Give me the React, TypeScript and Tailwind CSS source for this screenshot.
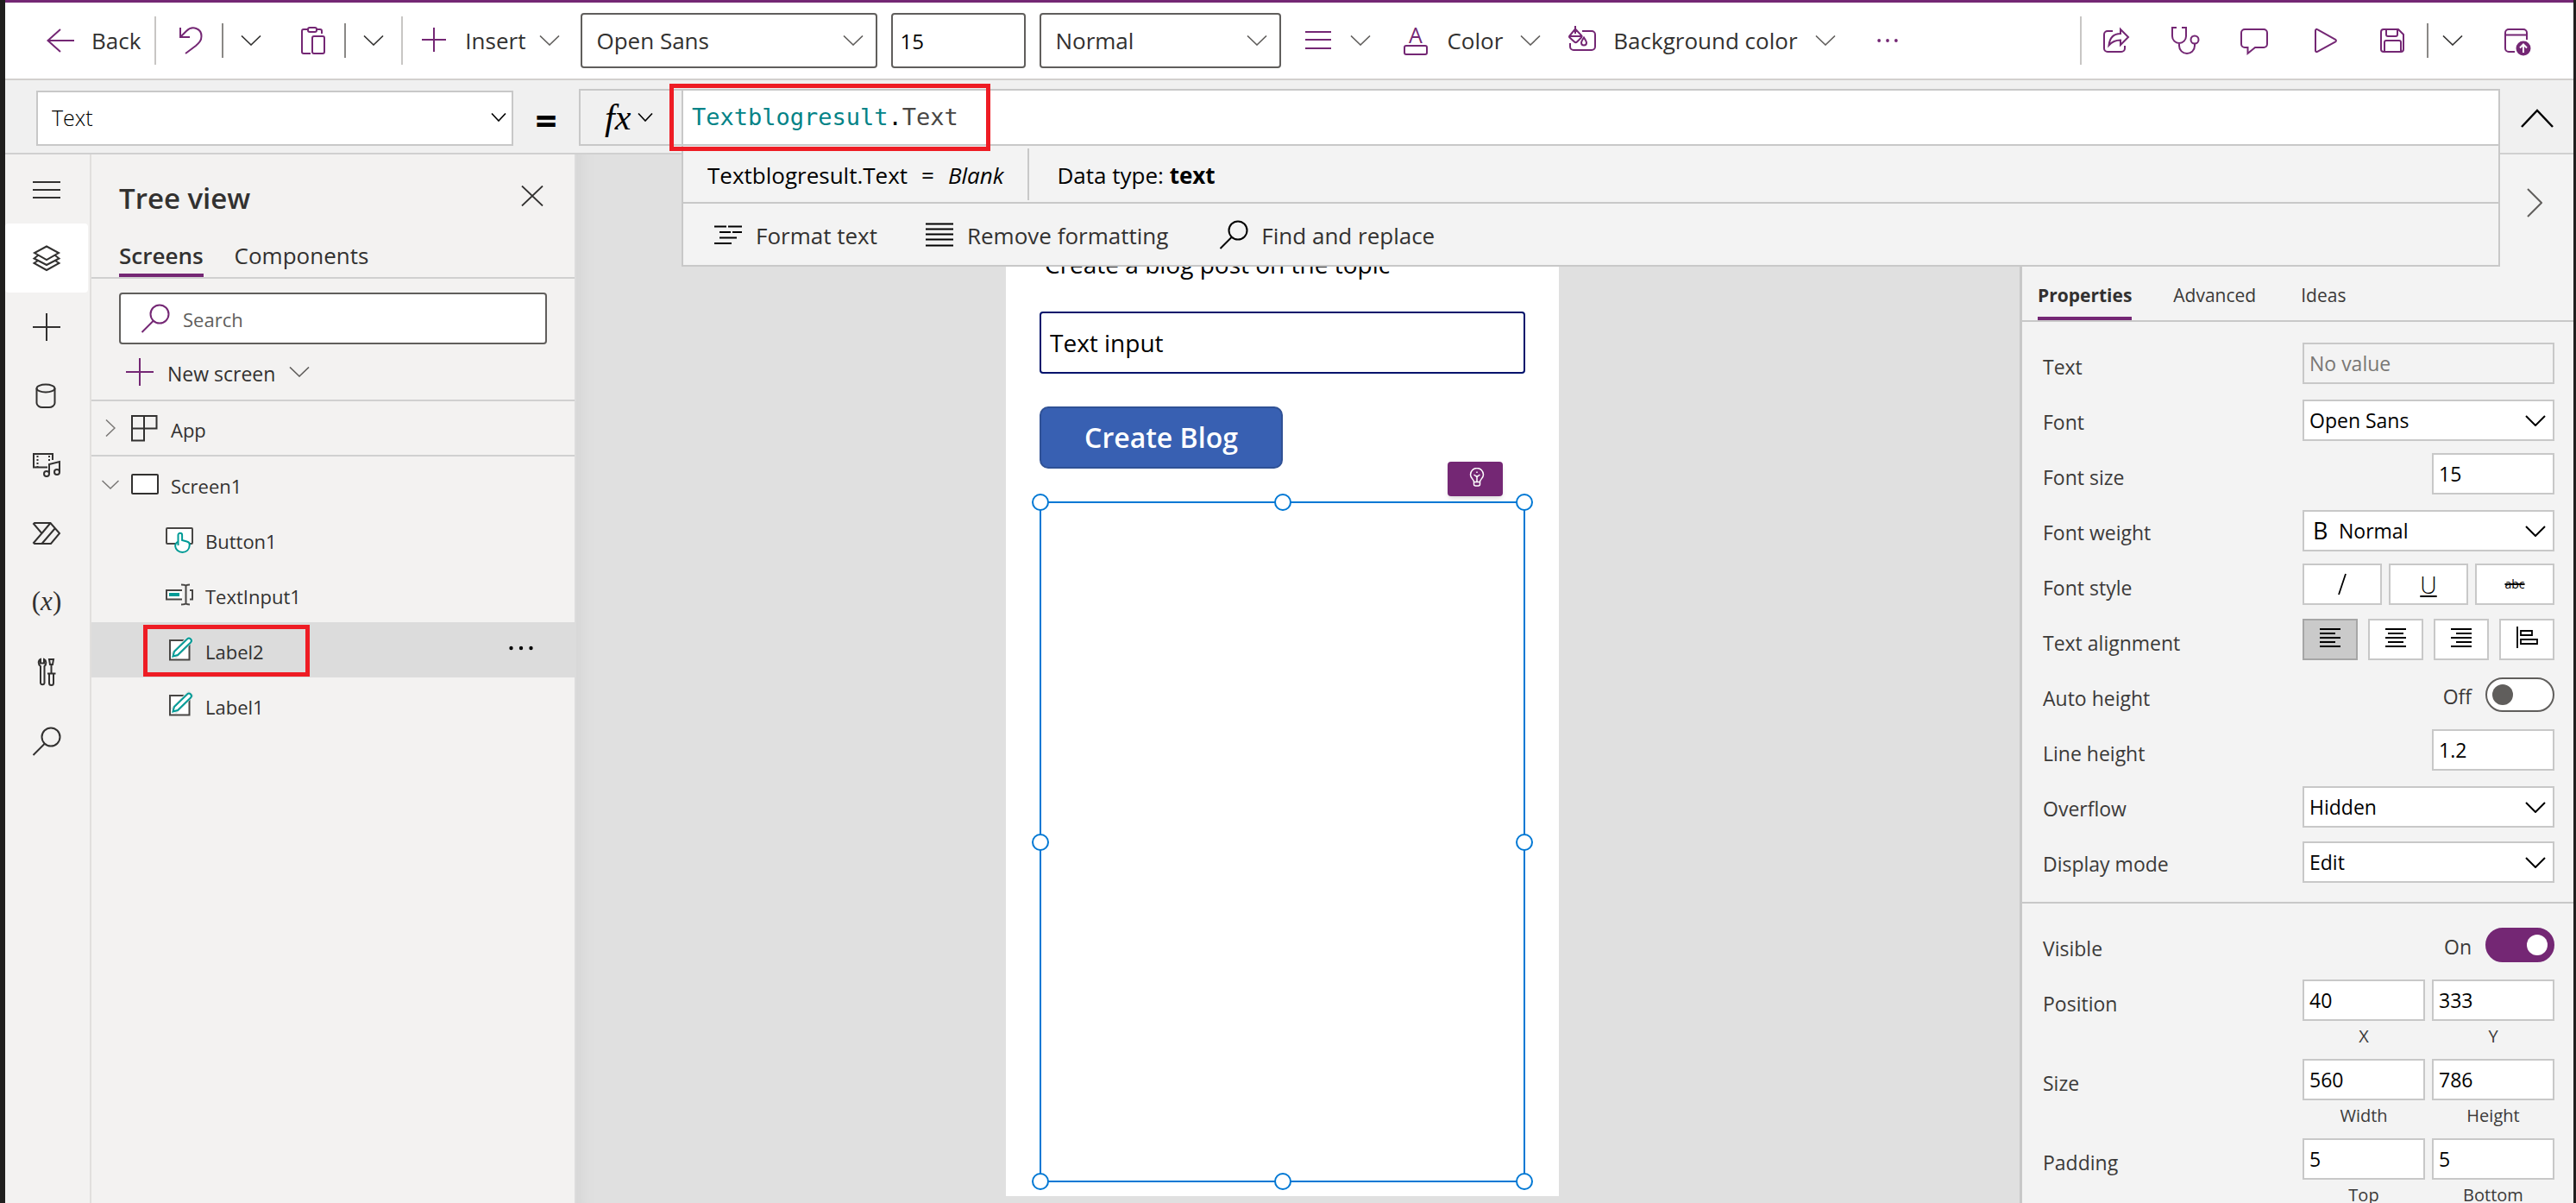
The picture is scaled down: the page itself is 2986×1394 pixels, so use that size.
import type { ReactNode } from "react";

/* ---------- icons ---------- */

function Icon({
  children,
  className = "text-[#742774]",
  size = 32,
}: {
  children: ReactNode;
  className?: string;
  size?: number;
}) {
  return (
    <svg
      width={size}
      height={size}
      viewBox={`0 0 ${size} ${size}`}
      fill="none"
      stroke="currentColor"
      strokeWidth="2"
      overflow="visible"
      aria-hidden="true"
      className={`shrink-0 ${className}`}
    >
      {children}
    </svg>
  );
}

function ChevronDown({ className = "text-[#605e5c]" }: { className?: string }) {
  return (
    <svg width="24" height="12" viewBox="0 0 24 12" fill="none" stroke="currentColor" strokeWidth="1.6" aria-hidden="true" className={`shrink-0 ${className}`}>
      <path d="M1 0.5L12 11L23 0.5" />
    </svg>
  );
}

function SmallChevron({ className = "text-[#323130]" }: { className?: string }) {
  return (
    <svg width="18" height="10" viewBox="0 0 18 10" fill="none" stroke="currentColor" strokeWidth="1.6" aria-hidden="true" className={`shrink-0 ${className}`}>
      <path d="M1 0.5L9 9L17 0.5" />
    </svg>
  );
}

const BackIcon = () => (
  <Icon>
    <path d="M32 16H1.5M16 3L1.5 16L16 29" />
  </Icon>
);
const UndoIcon = () => (
  <Icon>
    <path d="M4 1V12H15M4 12L11 5C18 -2 28.500 2 28.500 11C28.500 16 26 18.500 22 22L10 31" />
  </Icon>
);
const PasteIcon = () => (
  <Icon>
    <path d="M10 3H5a2 2 0 0 0-2 2v24a2 2 0 0 0 2 2h8" />
    <path d="M20 3h4a2 2 0 0 1 2 2v3" />
    <rect x="10" y="1" width="10" height="5" rx="2" />
    <rect x="15" y="11" width="14" height="20" rx="2" />
  </Icon>
);
const PlusIcon = ({ className }: { className?: string }) => (
  <Icon className={className}>
    <path d="M0 16H32M16 0V32" />
  </Icon>
);
const InsertIcon = () => (
  <Icon>
    <path d="M2 15H30M16 1V29" />
  </Icon>
);
const LinesIcon = () => (
  <Icon>
    <path d="M0 6H30M0 15H30M0 25H30" />
  </Icon>
);
const FontColorIcon = () => (
  <Icon>
    <text x="16" y="19" textAnchor="middle" fontFamily="Open Sans" fontSize="25" fill="currentColor" stroke="none">A</text>
    <rect x="3" y="22" width="26" height="10" rx="2" />
  </Icon>
);
const FillIcon = () => (
  <Icon>
    <path d="M8 -1V8M8 2.500L15.500 10.500Q16 11.500 15 12.500L10 17.500Q8.500 19 7 17.500L1.500 12.500Q0.500 11.500 1.500 10.500ZM1 11H16" />
    <path d="M16 5H27a4 4 0 0 1 4 4v14a4 4 0 0 1-4 4H6a4 4 0 0 1-4-4v-4" />
    <path d="M18 12.500c-2 3-3 4.500-3 6a3 3 0 0 0 6 0c0-1.500-1-3-3-6z" />
  </Icon>
);
const ShareIcon = () => (
  <Icon>
    <path d="M12 5H6a4 4 0 0 0-4 4v16a4 4 0 0 0 4 4h16a4 4 0 0 0 4-4v-3" />
    <path d="M21 3l9 9-9 9v-5.500c-6 0-10 2-13.500 6C8.500 13 12 8 21 8z" />
  </Icon>
);
const CheckerIcon = () => (
  <Icon>
    <path d="M6 1H1v10a8 8 0 0 0 16 0V1h-5M9 19v3a9 9 0 0 0 18 0v-3" />
    <circle cx="27" cy="15" r="4.500" />
  </Icon>
);
const CommentIcon = () => (
  <Icon>
    <path d="M5 3h22a4 4 0 0 1 4 4v13a4 4 0 0 1-4 4H17l-8.500 7V24H5a4 4 0 0 1-4-4V7a4 4 0 0 1 4-4z" />
  </Icon>
);
const PlayIcon = () => (
  <Icon>
    <path d="M7 4.500v23c0 1.500 1 2 2.200 1.300l21-11.500c1-.6 1-1.900 0-2.500l-21-11.600C8 2.500 7 3 7 4.500z" />
  </Icon>
);
const SaveIcon = () => (
  <Icon>
    <path d="M6 3h17l6 6v17a3 3 0 0 1-3 3H6a3 3 0 0 1-3-3V6a3 3 0 0 1 3-3z" />
    <path d="M9 3v6a2 2 0 0 0 2 2h9a2 2 0 0 0 2-2V3M7 29V18a2 2 0 0 1 2-2h15a2 2 0 0 1 2 2v11" />
  </Icon>
);
const PublishIcon = () => (
  <Icon>
    <path d="M26 15V7a4 4 0 0 0-4-4H5a4 4 0 0 0-4 4v18a4 4 0 0 0 4 4h7M1 9.500h25" />
    <circle cx="22" cy="25" r="8.500" fill="currentColor" stroke="none" />
    <path d="M22 30V20.500M18 24.500L22 20.500L26 24.500" stroke="#fff" />
  </Icon>
);
const SearchIcon = ({ className }: { className?: string }) => (
  <Icon className={className}>
    <circle cx="21" cy="11" r="10.500" />
    <path d="M14 18.500L0.500 32" />
  </Icon>
);
const MenuIcon = ({ className }: { className?: string }) => (
  <Icon className={className}>
    <path d="M0 8H32M0 17H32M0 26H32" />
  </Icon>
);
const LayersIcon = () => (
  <Icon className="text-[#323130]">
    <path d="M16 2.500L30 10L16 18L2 10zM6 13L1.500 16.500L16 24L30.500 16.500L26 13M6 19L1.500 22L16 30L30.500 22L26 19" />
  </Icon>
);
const DataIcon = () => (
  <Icon className="text-[#323130]">
    <ellipse cx="15" cy="7" rx="10.500" ry="4.500" />
    <path d="M4.500 7V24c0 3 3.500 5 6.500 5h8c3 0 6.500-2 6.500-5V7" />
  </Icon>
);
const MediaIcon = () => (
  <Icon className="text-[#323130]">
    <path d="M17 18.500H1V3H23V10" />
    <path d="M5.500 5V18M19 5V12" strokeDasharray="2 2" />
    <path d="M19 26V15L31 12V24" />
    <circle cx="16" cy="26" r="3" />
    <circle cx="28" cy="24" r="3" />
  </Icon>
);
const FlowIcon = () => (
  <Icon className="text-[#323130]">
    <path d="M2 3H20.500L31 15L21 27H2L1 26L10.500 15L1 4zM10.500 15L20.500 3M10.500 27L26 9" />
  </Icon>
);
const ToolsIcon = () => (
  <Icon className="text-[#323130]">
    <path d="M9 9C6 7 6 2.500 9 1V5.500H13V1C16 2.500 16 7 13.500 9V28.500a2.300 2.300 0 0 1-4.500 0z" />
    <path d="M19 1H24L23 7H20zM21.500 7V17M17 17.500H26.500M19 17.500V28.500a2.300 2.300 0 0 0 5 0V17.500" />
  </Icon>
);
const AppIcon = () => (
  <Icon className="text-[#323130]">
    <path d="M1 2H29.500V16.500H1zM1 16.500V30.500H15V2" />
  </Icon>
);
const ScreenIcon = () => (
  <Icon className="text-[#323130]">
    <rect x="1" y="5" width="30" height="22" rx="1" fill="#fff" />
  </Icon>
);
const ButtonIcon = () => (
  <Icon className="text-[#484644]">
    <rect x="1" y="3" width="30" height="18" rx="1" fill="#fff" />
    <path
      d="M14.500 23V11a2.300 2.300 0 0 1 4.600 0v6l5.500 1.500c2 .5 3.400 1.500 3.200 4-.3 5-3.500 8.500-8.300 8.500s-8-3.500-8.300-7c-.2-2.500.7-4 3.300-5.500"
      fill="#fff"
      stroke="#009b96"
    />
  </Icon>
);
const InputIcon = () => (
  <Icon className="text-[#484644]">
    <path d="M19 11H1V21.500H19M28 11H31V21.500H28" fill="#fff" />
    <path d="M4 16H16" stroke="#009b96" strokeWidth="4" />
    <path d="M18 4.500Q23 4.500 23.500 6Q24 4.500 28 4.500M23.500 6V26M18 27.500Q23 27.500 23.500 26Q24 27.500 28 27.500" />
  </Icon>
);
const LabelIcon = () => (
  <Icon className="text-[#484644]">
    <rect x="5" y="5" width="22.500" height="22.500" fill="#fff" />
    <path d="M9 23L30 2" stroke="#e3e3e3" strokeWidth="9" />
    <path d="M8.500 23.500L10 18L25 3.500a2.800 2.800 0 0 1 4 4L14 22z" fill="#fff" stroke="#009b96" />
  </Icon>
);
const Dots = ({ className }: { className: string }) => (
  <svg width="28" height="6" viewBox="0 0 28 6" fill="currentColor" aria-hidden="true" className={className}>
    <circle cx="2.500" cy="3" r="2.200" />
    <circle cx="14" cy="3" r="2.200" />
    <circle cx="25.500" cy="3" r="2.200" />
  </svg>
);

/* ---------- toolbar ---------- */

const Rule = () => <span className="h-14 w-0.5 shrink-0 bg-[#c8c6c4]" />;
const ShortRule = () => <span className="h-10 w-0.5 shrink-0 bg-[#8a8886]" />;

function IconButton({ label, children, className = "" }: { label: string; children: ReactNode; className?: string }) {
  return (
    <button type="button" aria-label={label} className={`flex h-14 shrink-0 items-center ${className}`}>
      {children}
    </button>
  );
}

function ToolbarSelect({ label, value, className }: { label: string; value: string; className: string }) {
  return (
    <div className={`relative h-16 shrink-0 ${className}`}>
      <select aria-label={label} defaultValue={value} className="h-full w-full appearance-none rounded border-2 border-[#605e5c] bg-white pl-4 text-[26px] text-[#323130]">
        <option>{value}</option>
      </select>
      <ChevronDown className="pointer-events-none absolute top-6.5 right-4 text-[#605e5c]" />
    </div>
  );
}

function Toolbar() {
  return (
    <header className="flex h-[90px] shrink-0 items-center border-b-2 border-[#d2d0ce] bg-white pl-12 text-[26px] text-[#323130]">
      <button type="button" className="flex h-14 shrink-0 items-center gap-5 pr-4">
        <BackIcon />
        Back
      </button>
      <Rule />
      <div className="flex items-center gap-5 pr-11 pl-6">
        <IconButton label="Undo"><UndoIcon /></IconButton>
        <ShortRule />
        <IconButton label="Undo options"><ChevronDown className="text-[#323130]" /></IconButton>
      </div>
      <div className="flex items-center gap-5 pr-5">
        <IconButton label="Paste"><PasteIcon /></IconButton>
        <ShortRule />
        <IconButton label="Paste options"><ChevronDown className="text-[#323130]" /></IconButton>
      </div>
      <Rule />
      <button type="button" className="flex h-14 shrink-0 items-center pr-6 pl-5">
        <InsertIcon />
        <span className="pr-4 pl-5">Insert</span>
        <ChevronDown />
      </button>
      <div className="flex gap-4">
        <ToolbarSelect label="Font" value="Open Sans" className="w-[344px]" />
        <input aria-label="Font size" defaultValue="15" className="h-16 w-[156px] rounded border-2 border-[#605e5c] pl-2 text-2xl text-black" />
        <ToolbarSelect label="Font weight" value="Normal" className="w-[280px]" />
      </div>
      <button type="button" aria-label="Text alignment" className="flex h-14 shrink-0 items-center gap-5 pl-7">
        <LinesIcon />
        <ChevronDown />
      </button>
      <button type="button" className="flex h-14 shrink-0 items-center pl-9">
        <FontColorIcon />
        <span className="px-5">Color</span>
        <ChevronDown />
      </button>
      <button type="button" className="flex h-14 shrink-0 items-center pl-8">
        <FillIcon />
        <span className="px-5 whitespace-nowrap">Background color</span>
        <ChevronDown />
      </button>
      <IconButton label="More commands" className="pl-12"><Dots className="w-6 text-[#742774]" /></IconButton>

      <div className="ml-auto flex items-center pr-12">
        <Rule />
        <div className="flex gap-12 pr-6 pl-6">
          <IconButton label="Share"><ShareIcon /></IconButton>
          <IconButton label="App checker"><CheckerIcon /></IconButton>
          <IconButton label="Comments"><CommentIcon /></IconButton>
          <IconButton label="Preview"><PlayIcon /></IconButton>
          <IconButton label="Save"><SaveIcon /></IconButton>
        </div>
        <ShortRule />
        <IconButton label="Save options" className="pr-12 pl-4"><ChevronDown className="text-[#323130]" /></IconButton>
        <IconButton label="Publish"><PublishIcon /></IconButton>
      </div>
    </header>
  );
}

/* ---------- formula bar ---------- */

function FormulaBar() {
  return (
    <div className="flex h-[86px] shrink-0 items-start border-b-2 border-[#d0d0d0] bg-[#f0f0f0] pt-2.5 pl-9">
      <div className="relative mt-0.5 h-16 w-[553px] shrink-0">
        <select aria-label="Property" defaultValue="Text" className="h-full w-full appearance-none border-2 border-[#c8c8c8] bg-white pl-4 text-[25px] font-light text-black">
          <option>Text</option>
        </select>
        <SmallChevron className="pointer-events-none absolute top-6.5 right-2 text-black" />
      </div>
      <span className="w-[76px] shrink-0 pt-2 text-center text-[44px] leading-14 font-bold text-black">=</span>
      <button type="button" aria-label="Function" className="flex h-[66px] w-[119px] shrink-0 items-center gap-2 border-2 border-r-0 border-[#c8c8c8] pl-7 text-black">
        <span className="font-['Liberation_Serif'] text-[42px] leading-none italic">fx</span>
        <SmallChevron className="text-black" />
      </button>

      <div className="relative min-w-0 flex-1">
        <div
          role="textbox"
          aria-label="Formula"
          contentEditable
          suppressContentEditableWarning
          className="flex h-[66px] items-center border-2 border-[#c8c8c8] bg-white pl-2.5 font-['DejaVu_Sans_Mono'] text-[27px]"
        >
          <span className="text-[#038387]">Textblogresult</span>
          <span className="text-black">.</span>
          <span className="text-[#484644]">Text</span>
        </div>
        <div className="absolute inset-x-0 top-full z-10 border-2 border-t-0 border-[#c8c8c8] bg-[#f3f3f3]">
          <div className="flex h-[67px] items-center border-b-2 border-[#c8c8c8] pl-7 text-[26px] whitespace-pre text-black">
            <span className="pt-1">Textblogresult.Text</span>
            <span className="px-4 pt-1">=</span>
            <i className="pt-1">Blank</i>
            <span className="mr-8 ml-7 h-15 w-0.5 bg-[#c8c8c8]" />
            <span className="pt-1">Data type: <b>text</b></span>
          </div>
          <div className="flex h-[71px] items-center gap-14 pl-9 text-[26px] text-[#323130]">
            <button type="button" className="flex items-center gap-4">
              <Icon className="text-black">
                <path d="M0 6.500H14M16 6.500H32M6 13H19M21 13H32M6 19.500H26M0 26H20" />
              </Icon>
              <span className="pt-1">Format text</span>
            </button>
            <button type="button" className="flex items-center gap-4">
              <Icon className="text-black">
                <path d="M0 3.500H32M0 9.500H32M0 15.500H32M0 21.500H32M0 28.500H32" />
              </Icon>
              <span className="pt-1">Remove formatting</span>
            </button>
            <button type="button" className="flex items-center gap-4 pl-1">
              <SearchIcon className="text-black" />
              <span className="pt-1">Find and replace</span>
            </button>
          </div>
        </div>
        <div className="pointer-events-none absolute -top-1.5 -left-3.5 z-20 h-[78px] w-[372px] border-[5px] border-[#ee1c24]" />
      </div>

      <button type="button" aria-label="Collapse formula bar" className="flex h-16 w-[85px] shrink-0 items-center justify-center pt-1">
        <svg width="38" height="22" viewBox="0 0 38 22" fill="none" stroke="#000" strokeWidth="2.500" aria-hidden="true">
          <path d="M1 21L19 2L37 21" />
        </svg>
      </button>
    </div>
  );
}

/* ---------- left rail ---------- */

const railItems: { label: string; icon: ReactNode; active?: boolean }[] = [
  { label: "Expand menu", icon: <MenuIcon className="text-[#323130]" /> },
  { label: "Tree view", icon: <LayersIcon />, active: true },
  { label: "Insert", icon: <PlusIcon className="text-[#323130]" /> },
  { label: "Data", icon: <DataIcon /> },
  { label: "Media", icon: <MediaIcon /> },
  { label: "Power Automate", icon: <FlowIcon /> },
  {
    label: "Variables",
    icon: <span className="pb-1.5 font-['Liberation_Serif'] text-[31px] leading-none text-[#323130]">(<i>x</i>)</span>,
  },
  { label: "Advanced tools", icon: <ToolsIcon /> },
  { label: "Search", icon: <SearchIcon className="text-[#323130]" /> },
];

function Rail() {
  return (
    <nav className="w-25 shrink-0 border-r-2 border-[#e1dfdd] bg-[#f3f2f1]">
      {railItems.map((item) => (
        <button
          key={item.label}
          type="button"
          aria-label={item.label}
          className={`flex h-20 w-24 items-center justify-center rounded ${item.active ? "bg-white" : ""}`}
        >
          {item.icon}
        </button>
      ))}
    </nav>
  );
}

/* ---------- tree view ---------- */

const controls: { name: string; icon: ReactNode; selected?: boolean }[] = [
  { name: "Button1", icon: <ButtonIcon /> },
  { name: "TextInput1", icon: <InputIcon /> },
  { name: "Label2", icon: <LabelIcon />, selected: true },
  { name: "Label1", icon: <LabelIcon /> },
];

function TreeView() {
  return (
    <aside className="w-[562px] shrink-0 border-r-2 border-[#dcdcdc] bg-[#f3f2f1] text-[#323130]">
      <div className="flex h-24 items-center justify-between pt-1.5 pr-9 pl-8">
        <h2 className="text-[33px] font-semibold">Tree view</h2>
        <IconButton label="Close" className="pb-1.5">
          <svg width="26" height="24" viewBox="0 0 26 24" fill="none" stroke="currentColor" strokeWidth="1.800" aria-hidden="true">
            <path d="M1 0.500L25 23.500M25 0.500L1 23.500" />
          </svg>
        </IconButton>
      </div>
      <div role="tablist" className="flex h-12 items-stretch gap-9 border-b-2 border-[#d0d0d0] pl-8 text-[26px]">
        <button type="button" role="tab" aria-selected="true" className="border-b-4 border-[#742774] leading-none font-semibold">Screens</button>
        <button type="button" role="tab" aria-selected="false" className="border-b-4 border-transparent leading-none">Components</button>
      </div>
      <label className="mx-8 mt-4 flex h-15 items-center gap-4 rounded border-2 border-[#605e5c] bg-white pl-6">
        <SearchIcon />
        <input type="search" aria-label="Search" placeholder="Search" className="min-w-0 flex-1 pt-0.5 text-[22px] outline-none placeholder:text-[#605e5c]" />
      </label>
      <button type="button" className="flex h-16 w-full items-center gap-4 pl-10 text-[23px]">
        <PlusIcon />
        <span className="pt-1">New screen</span>
        <ChevronDown />
      </button>
      <ul className="border-t-2 border-[#d0d0d0] text-[22px]">
        <li className="flex h-16 items-center border-b-2 border-[#d0d0d0] pl-4">
          <svg width="12" height="20" viewBox="0 0 12 20" fill="none" stroke="#797775" strokeWidth="1.500" aria-hidden="true">
            <path d="M1 0.500L11 10L1 19.500" />
          </svg>
          <span className="flex items-center gap-3.5 pl-4.5"><AppIcon /><span className="pt-1">App</span></span>
        </li>
        <li>
          <div className="flex h-16 items-center gap-3.5 pl-3">
            <svg width="20" height="11" viewBox="0 0 20 11" fill="none" stroke="#797775" strokeWidth="1.500" aria-hidden="true">
              <path d="M0.500 1L10 10L19.500 1" />
            </svg>
            <ScreenIcon />
            <span className="pt-1">Screen1</span>
          </div>
          <ul>
            {controls.map((c) => (
              <li key={c.name} className={`relative flex h-16 items-center gap-3.5 pr-12 pl-[86px] ${c.selected ? "bg-[#dcdcdc]" : ""}`}>
                {c.icon}
                <span className="pt-1">{c.name}</span>
                {c.selected && (
                  <>
                    <IconButton label="More actions" className="ml-auto pb-1"><Dots className="w-7 text-black" /></IconButton>
                    <span className="pointer-events-none absolute top-[3px] left-15 h-15 w-[193px] border-[5px] border-[#ee1c24]" />
                  </>
                )}
              </li>
            ))}
          </ul>
        </li>
      </ul>
    </aside>
  );
}

/* ---------- canvas ---------- */

const handles = [
  "-top-[11px] -left-[11px]",
  "-top-[11px] left-1/2 -ml-2.5",
  "-top-[11px] -right-[11px]",
  "top-1/2 -left-[11px] -mt-2.5",
  "top-1/2 -right-[11px] -mt-2.5",
  "-bottom-[11px] -left-[11px]",
  "-bottom-[11px] left-1/2 -ml-2.5",
  "-bottom-[11px] -right-[11px]",
];

function Canvas() {
  return (
    <main className="flex min-w-0 flex-1 items-start justify-center overflow-hidden bg-[#e0e0e0] pt-[71px] pr-9 shadow-[inset_24px_0_24px_-24px_rgba(0,0,0,0.08)]">
      <div className="w-[641px] shrink-0 bg-white px-[39px] pt-10 pb-4 text-[28px] text-black">
        <p className="pl-1.5 leading-8">Create a blog post on the topic</p>
        <input aria-label="Topic" defaultValue="Text input" className="mt-[39px] block h-18 w-full rounded border-2 border-[#00126b] pl-2.5" />
        <button type="button" className="mt-[38px] block h-18 w-[282px] rounded-[10px] border-2 border-[#2f5195] bg-[#3860b2] text-[32px] font-semibold text-white">
          Create Blog
        </button>
        <div className="relative mt-[38px] h-[789px] border-2 border-[#0078d4]">
          <button type="button" aria-label="Ideas" className="absolute -top-12 right-6 flex h-10 w-16 items-center justify-center rounded-sm bg-[#742774] pb-1 pl-1 text-white shadow-md">
            <svg width="18" height="22" viewBox="0 0 18 22" fill="none" stroke="currentColor" strokeWidth="1.500" aria-hidden="true">
              <path d="M5.500 16.500C5.500 13.500 1.500 12 1.500 8a7.500 7.500 0 0 1 15 0c0 4-4 5.500-4 8.500zM5.500 16.500V19a2 2 0 0 0 2 2h3a2 2 0 0 0 2-2V16.500M9 16V9M5.500 8L9 10.500L12.500 8M9 4.500V6" />
            </svg>
          </button>
          {handles.map((place) => (
            <span key={place} className={`absolute size-5 rounded-full border-2 border-[#0078d4] bg-white ${place}`} />
          ))}
        </div>
      </div>
    </main>
  );
}

/* ---------- properties ---------- */

function Row({ label, htmlFor, children }: { label: string; htmlFor?: string; children: ReactNode }) {
  return (
    <div className="flex h-16 items-center justify-between">
      {htmlFor ? (
        <label htmlFor={htmlFor} className="pt-1">{label}</label>
      ) : (
        <span className="pt-1">{label}</span>
      )}
      {children}
    </div>
  );
}

function PropSelect({ id, label, value, prefix }: { id: string; label: string; value: string; prefix?: string }) {
  return (
    <Row label={label} htmlFor={id}>
      <div className="relative h-12 w-[292px]">
        {prefix && <span className="pointer-events-none absolute top-2 left-3 text-[27px] leading-8 font-medium text-black">{prefix}</span>}
        <select
          id={id}
          defaultValue={value}
          className={`h-full w-full appearance-none border-2 border-[#c8c8c8] bg-white text-black ${prefix ? "pl-10" : "pl-1.5"}`}
        >
          <option>{value}</option>
        </select>
        <svg width="24" height="13" viewBox="0 0 24 13" fill="none" stroke="#000" strokeWidth="2" aria-hidden="true" className="pointer-events-none absolute top-4.5 right-2.5">
          <path d="M1 1L12 12L23 1" />
        </svg>
      </div>
    </Row>
  );
}

function PropNumber({ id, label, value }: { id: string; label: string; value: string }) {
  return (
    <Row label={label} htmlFor={id}>
      <input id={id} defaultValue={value} className="mb-1 h-12 w-[142px] border-2 border-[#c8c8c8] bg-white pl-1.5 text-black" />
    </Row>
  );
}

function PropToggle({ id, label, on }: { id: string; label: string; on: boolean }) {
  return (
    <Row label={label} htmlFor={id}>
      <div className="mb-1 flex items-center gap-4">
        <span className="pt-1">{on ? "On" : "Off"}</span>
        <input
          id={id}
          type="checkbox"
          role="switch"
          defaultChecked={on}
          className="flex h-10 w-20 appearance-none items-center rounded-full border-2 border-[#605e5c] bg-white px-1.5 before:size-6 before:rounded-full before:bg-[#605e5c] checked:justify-end checked:border-[#742774] checked:bg-[#742774] checked:before:bg-white"
        />
      </div>
    </Row>
  );
}

function PropPair({ label, fields }: { label: string; fields: [string, string][] }) {
  return (
    <div className="h-23">
      <Row label={label}>
        <div className="flex gap-2 pt-7">
          {fields.map(([name, value]) => (
            <label key={name} className="flex w-[142px] flex-col-reverse gap-1 text-center text-xl leading-7">
              {name}
              <input defaultValue={value} className="h-12 w-full border-2 border-[#c8c8c8] bg-white pl-1.5 text-[23px] text-black" />
            </label>
          ))}
        </div>
      </Row>
    </div>
  );
}

function StyleButton({ label, children }: { label: string; children: ReactNode }) {
  return (
    <button type="button" aria-label={label} className="flex h-12 w-23 items-center justify-center border-2 border-[#c8c8c8] bg-white text-black">
      {children}
    </button>
  );
}

const alignments = [
  { label: "Align left", d: "M0 2H24M0 7H18M0 12H24M0 17H18M0 22H24", on: true },
  { label: "Align center", d: "M0 2H24M3 7H21M0 12H24M3 17H21M0 22H24" },
  { label: "Align right", d: "M0 2H24M6 7H24M0 12H24M6 17H24M0 22H24" },
  { label: "Vertical alignment", d: "M1 -1V24M5 4H18V9H5zM5 14H24V19H5z" },
];

function Properties() {
  return (
    <aside className="w-[642px] shrink-0 overflow-hidden border-l-[3px] border-[#c8c8c8] bg-[#f3f3f3] text-[23px] text-[#3b3a39]">
      <div className="flex h-28 justify-end pr-9">
        <IconButton label="Collapse pane" className="h-28">
          <svg width="18" height="34" viewBox="0 0 18 34" fill="none" stroke="#605e5c" strokeWidth="2" aria-hidden="true">
            <path d="M1 1L17 17L1 33" />
          </svg>
        </IconButton>
      </div>
      <div role="tablist" className="flex h-[82px] items-stretch gap-12 border-b-2 border-[#c8c8c8] pl-4.5 text-[21px]">
        <button type="button" role="tab" aria-selected="true" className="border-b-4 border-[#742774] pt-7 font-bold text-[#323130]">Properties</button>
        <button type="button" role="tab" aria-selected="false" className="border-b-4 border-transparent pt-7">Advanced</button>
        <button type="button" role="tab" aria-selected="false" className="ml-1 border-b-4 border-transparent pt-7">Ideas</button>
      </div>
      <div className="border-b-2 border-[#c8c8c8] pt-4.5 pr-5.5 pb-3.5 pl-6">
        <Row label="Text" htmlFor="prop-text">
          <input id="prop-text" placeholder="No value" className="mb-1 h-12 w-[292px] border-2 border-[#c8c8c8] pl-1.5 placeholder:text-[#797775]" />
        </Row>
        <PropSelect id="prop-font" label="Font" value="Open Sans" />
        <PropNumber id="prop-size" label="Font size" value="15" />
        <PropSelect id="prop-weight" label="Font weight" value="Normal" prefix="B" />
        <Row label="Font style">
          <div className="mb-1 flex gap-2">
            <StyleButton label="Italic">
              <svg width="10" height="26" viewBox="0 0 10 26" fill="none" stroke="currentColor" strokeWidth="1.800" aria-hidden="true">
                <path d="M1 25L9 1" />
              </svg>
            </StyleButton>
            <StyleButton label="Underline">
              <span className="text-[27px] leading-none font-light underline underline-offset-2">U</span>
            </StyleButton>
            <StyleButton label="Strikethrough">
              <span className="text-sm leading-none line-through decoration-2">abc</span>
            </StyleButton>
          </div>
        </Row>
        <Row label="Text alignment">
          <div className="mb-1 flex gap-3">
            {alignments.map((a) => (
              <button
                key={a.label}
                type="button"
                aria-label={a.label}
                aria-pressed={!!a.on}
                className={`flex h-12 w-16 items-center justify-center border-2 text-black ${a.on ? "border-[#a6a6a6] bg-[#cacaca]" : "border-[#c8c8c8] bg-white"}`}
              >
                <Icon size={24} className="mb-1 text-black"><path d={a.d} strokeWidth="1.800" /></Icon>
              </button>
            ))}
          </div>
        </Row>
        <PropToggle id="prop-auto" label="Auto height" on={false} />
        <PropNumber id="prop-line" label="Line height" value="1.2" />
        <PropSelect id="prop-overflow" label="Overflow" value="Hidden" />
        <PropSelect id="prop-display" label="Display mode" value="Edit" />
      </div>
      <div className="pt-4.5 pr-5.5 pl-6">
        <PropToggle id="prop-visible" label="Visible" on />
        <PropPair label="Position" fields={[["X", "40"], ["Y", "333"]]} />
        <PropPair label="Size" fields={[["Width", "560"], ["Height", "786"]]} />
        <PropPair label="Padding" fields={[["Top", "5"], ["Bottom", "5"]]} />
      </div>
    </aside>
  );
}

export default function App() {
  return (
    <div className="flex h-screen flex-col overflow-hidden border-r-[3px] border-l-[6px] border-[#201f1e] bg-[#e0e0e0] font-['Open_Sans',sans-serif]">
      <div className="h-[3px] shrink-0 bg-[#742774]" />
      <Toolbar />
      <FormulaBar />
      <div className="flex min-h-0 flex-1">
        <Rail />
        <TreeView />
        <Canvas />
        <Properties />
      </div>
    </div>
  );
}
